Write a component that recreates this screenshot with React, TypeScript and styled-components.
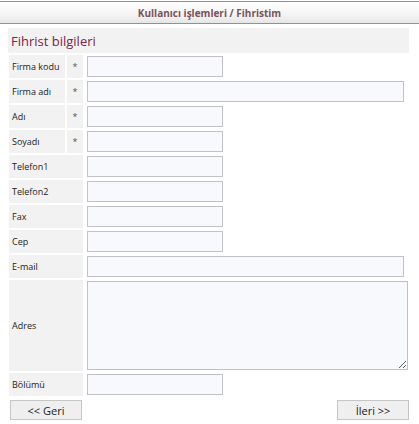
import React from 'react'
import styled, { createGlobalStyle } from 'styled-components'

const Global = createGlobalStyle`
	html, body {
		margin: 0;
		padding: 0;
		background: #ffffff;
		font-family: "Open Sans", "Liberation Sans", sans-serif;
	}
`

const Header = styled.div`
	margin-top: 1px;
	height: 21px;
	border-top: 1px solid #8593a8;
	border-bottom: 1px solid #8593a8;
	background: linear-gradient(to bottom, #ffffff 0%, #f4f4f4 60%, #e6e6e6 100%);
	display: flex;
	align-items: center;
	justify-content: center;
	font-size: 10px;
	font-weight: bold;
	color: #7a5259;
`

const Page = styled.div`
	margin: 4px 10px 0 8px;
`

const Title = styled.div`
	height: 25px;
	background: #f2f2f2;
	display: flex;
	align-items: center;
	padding-left: 3px;
	font-size: 13px;
	color: #80204b;
`

const Grid = styled.div`
	display: grid;
	grid-template-columns: 56px 16px 1fr;
	column-gap: 2px;
	row-gap: 2px;
	margin: 2px 0 0 1px;
`

const Label = styled.div<{ $span?: boolean; $tall?: boolean }>`
	grid-column: ${p => (p.$span ? 'span 2' : 'span 1')};
	background: #f2f2f2;
	min-height: ${p => (p.$tall ? '91px' : '23px')};
	display: flex;
	align-items: center;
	padding-left: 3px;
	font-size: 9px;
	color: #222;
`

const Star = styled.div`
	background: #f2f2f2;
	display: flex;
	align-items: center;
	justify-content: center;
	font-size: 9px;
	color: #555;
`

const Field = styled.div`
	display: flex;
	align-items: center;
	padding-left: 2px;
`

const Input = styled.input<{ $wide?: boolean }>`
	box-sizing: border-box;
	width: ${p => (p.$wide ? '317px' : '136px')};
	height: 21px;
	margin: 0;
	border: 1px solid #c2c2c6;
	background: #f8f9fc;
	outline: none;
`

const Area = styled.textarea`
	box-sizing: border-box;
	width: 321px;
	height: 89px;
	margin: 0;
	border: 1px solid #c2c2c6;
	background: #f8f9fc;
	outline: none;
	font-family: inherit;
`

const Buttons = styled.div`
	display: flex;
	justify-content: space-between;
	margin: 4px 0 0 2px;
	width: 399px;
`

const Button = styled.button`
	box-sizing: border-box;
	width: 72px;
	height: 20px;
	border: 1px solid #c6c6c6;
	background: #efefef;
	font-family: "Open Sans", "Liberation Sans", sans-serif;
	font-size: 11px;
	color: #222;
	padding: 0;
`

type Row = { label: string; star?: boolean; wide?: boolean }

const rows: Row[] = [
	{ label: 'Firma kodu', star: true },
	{ label: 'Firma adı', star: true, wide: true },
	{ label: 'Adı', star: true },
	{ label: 'Soyadı', star: true },
	{ label: 'Telefon1' },
	{ label: 'Telefon2' },
	{ label: 'Fax' },
	{ label: 'Cep' },
	{ label: 'E-mail', wide: true },
]

const App = () => {
	return (
		<>
			<Global />
			<Header>Kullanıcı işlemleri / Fihristim</Header>
			<Page>
				<Title>Fihrist bilgileri</Title>
				<Grid>
					{rows.map(r => (
						<React.Fragment key={r.label}>
							{r.star ? (
								<>
									<Label>{r.label}</Label>
									<Star>*</Star>
								</>
							) : (
								<Label $span>{r.label}</Label>
							)}
							<Field>
								<Input $wide={r.wide} />
							</Field>
						</React.Fragment>
					))}
					<Label $span $tall>Adres</Label>
					<Field>
						<Area />
					</Field>
					<Label $span>Bölümü</Label>
					<Field>
						<Input />
					</Field>
				</Grid>
				<Buttons>
					<Button>&lt;&lt; Geri</Button>
					<Button>İleri &gt;&gt;</Button>
				</Buttons>
			</Page>
		</>
	)
}

export default App
